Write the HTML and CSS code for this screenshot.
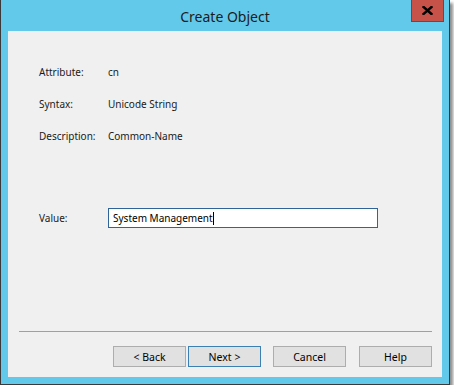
FILE: index.html
```html
<!DOCTYPE html>
<html lang="en">
<head>
    <meta charset="UTF-8">
    <title>Create Object</title>
    <link rel="stylesheet" href="styles.css">
</head>
<body>
    <div class="window">
        <div class="titlebar">
            <span></span>
            <h1 class="title">Create Object</h1>
            <button class="close-btn" title="Close">
                <svg width="11" height="9" viewBox="0 0 11 9">
                    <path d="M1.5 1 L9.5 8 M9.5 1 L1.5 8" stroke="#000" stroke-width="2.4" stroke-linecap="square"/>
                </svg>
            </button>
        </div>

        <div class="content">
            <div class="fields">
                <span class="label">Attribute:</span><span class="val">cn</span>
                <span class="label">Syntax:</span><span class="val">Unicode String</span>
                <span class="label">Description:</span><span class="val">Common-Name</span>
            </div>

            <div class="value-row">
                <span class="label">Value:</span>
                <div class="textbox">System Management<span class="caret"></span></div>
            </div>

            <div class="footer">
                <hr class="separator">
                <div class="buttons">
                    <button class="btn">&lt; Back</button>
                    <button class="btn btn-default">Next &gt;</button>
                    <button class="btn btn-cancel">Cancel</button>
                    <button class="btn btn-help">Help</button>
                </div>
            </div>
        </div>
    </div>
</body>
</html>
```

FILE: styles.css
```css
:root {
    --frame: #63c9ea; --face: #f0f0f0; --text: #1a1a1a;
    --btn-face: #e1e1e1; --btn-border: #adadad; --focus: #2f6499;
}
body { margin: 0; background: #fff; font-family: 'Noto Sans', 'Open Sans', sans-serif; font-size: 10px; color: var(--text); }
.window { width: 448px; height: 384px; background: var(--frame); border: 1px solid #3a3a3a; border-top: none; box-shadow: 3px 3px 3px rgba(0,0,0,0.45); }
.titlebar { height: 31px; display: grid; grid-template-columns: 1fr auto 1fr; align-items: center; }
.title { margin: 0; padding-top: 1px; font-size: 14px; font-weight: 400; color: #1b1b1b; }
.close-btn { justify-self: end; align-self: start; margin-right: 5px; width: 33px; height: 22px; padding: 0; background: #c7524a; border: 1px solid #8e3a33; border-top: none; display: flex; align-items: center; justify-content: center; }
.content { margin: 0 7px; height: 346px; background: var(--face); display: flex; flex-direction: column; padding-top: 25px; box-sizing: border-box; }
.fields { display: grid; grid-template-columns: 69px auto; grid-auto-rows: 32px; align-items: center; padding-left: 31px; }
.value-row { display: grid; grid-template-columns: 69px 270px; align-items: center; padding-left: 31px; margin-top: 56px; }
.textbox { height: 20px; box-sizing: border-box; border: 1px solid var(--focus); background: #fff; padding-left: 4px; line-height: 18px; color: #000; }
.caret { display: inline-block; width: 1px; height: 13px; background: #000; vertical-align: -3px; }
.footer { margin-top: auto; padding: 0 10px 10px 11px; }
.separator { margin: 0 0 14px; border: none; border-top: 1px solid #a0a0a0; }
.buttons { display: flex; justify-content: flex-end; }
.btn { width: 73px; height: 21px; padding: 0; background: var(--btn-face); border: 1px solid var(--btn-border); font-family: inherit; font-size: 10.5px; color: #000; }
.btn-default { margin-left: 2px; border-color: #3c7fb1; }
.btn-cancel { margin-left: 12px; }
.btn-help { margin-left: 13px; }
```
